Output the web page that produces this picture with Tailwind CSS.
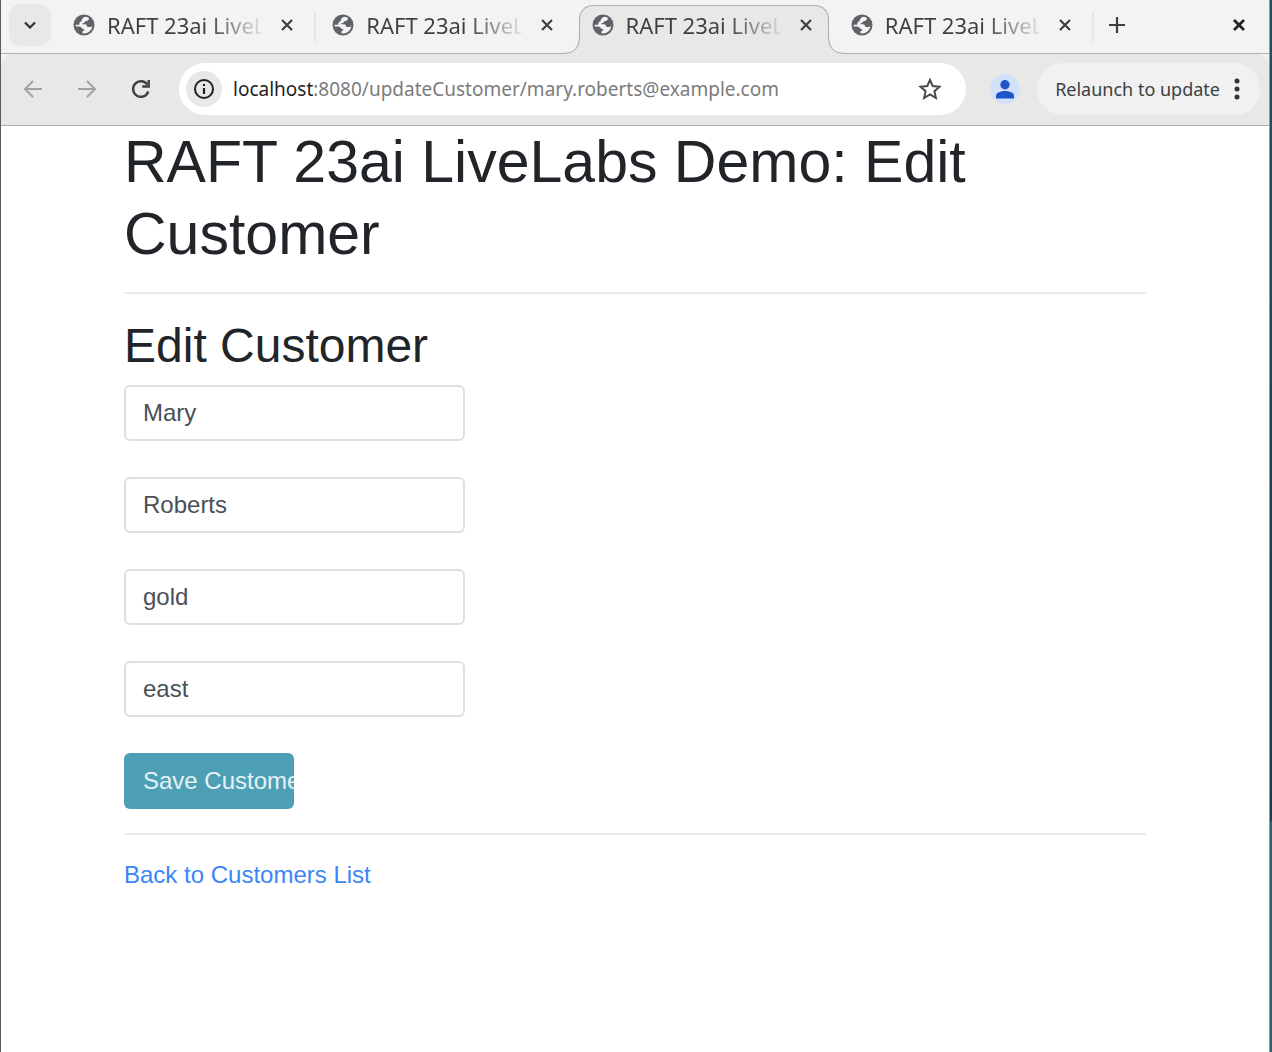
<!DOCTYPE html>
<html lang="en">
<head>
<meta charset="utf-8">
<title>RAFT 23ai LiveLabs Demo</title>
<script src="https://cdn.jsdelivr.net/npm/@tailwindcss/browser@4"></script>
</head>
<body class="flex min-h-screen bg-white">
<svg class="hidden" aria-hidden="true">
  <symbol id="globe" viewBox="0 0 22 22">
    <circle cx="11" cy="11" r="10.500" fill="#5f6368"/>
    <path d="M12.500 2.800 C14.200 3 15.500 3.600 16 4.300 C15.800 6.300 14.500 7.200 12.300 7.200 C12 8.500 11 9 9.500 9.200 L9.300 10.300 H12 C13.500 10.400 14.200 11.500 14.300 13 H17.500 C18.500 13 19 12 19.400 11 A8.400 8.400 0 0 1 9.500 19.300 V17.200 C10.500 16.900 11.300 16.200 11.400 15.200 C9.500 14.900 8.500 14.300 8 13 L6 12.600 H2.700 L2.600 10.800 H6.300 C6.300 8.800 6.700 7.500 8.500 7.200 C9 5 10 3.200 12.500 2.800Z" fill="#f3f3f3"/>
  </symbol>
  <symbol id="cross" viewBox="0 0 12 12">
    <path d="M1 1 L11 11 M11 1 L1 11" fill="none" stroke="currentColor" stroke-width="2.200"/>
  </symbol>
</svg>
<div class="flex min-w-0 flex-1 flex-col border-r border-l border-r-[#8b9a9b] border-l-[#5b5b5b] font-['Noto_Sans',sans-serif] text-[#3c4043]">
  <header>
    <div class="flex h-[54px] items-stretch bg-[#f3f3f3] shadow-[inset_0_-1px_0_#b0b0af]">
      <button aria-label="Search tabs" class="mt-1 ml-2 flex size-[42px] shrink-0 items-center justify-center rounded-xl bg-[#e8e8e6]">
        <svg class="h-2 w-3" viewBox="0 0 12 8"><path d="M1 1.500 L6 6.500 L11 1.500" fill="none" stroke="#303335" stroke-width="2.200"/></svg>
      </button>
      <nav aria-label="Tabs" class="ml-[9px] flex max-w-[1037px] min-w-0 flex-1">
        <div class="flex min-w-0 flex-1 items-center pr-[17px] pb-1 pl-[13px]">
          <svg class="size-[22px] shrink-0"><use href="#globe"/></svg>
          <a href="#" class="ml-3 min-w-0 flex-1 overflow-hidden bg-linear-to-r from-[#3c4043] from-65% to-[#3c4043]/10 to-100% bg-clip-text text-[22px] leading-8 whitespace-nowrap text-transparent">RAFT 23ai LiveLabs</a>
          <button aria-label="Close tab" class="ml-5"><svg class="size-3"><use href="#cross"/></svg></button>
        </div>
        <span class="my-3 w-[9px] shrink-0 bg-linear-to-r from-[#e6e6e4] to-[#e6e6e4] bg-[length:2px_100%] bg-center bg-no-repeat"></span>
        <div class="flex min-w-0 flex-1 items-center pr-[17px] pb-1 pl-[13px]">
          <svg class="size-[22px] shrink-0"><use href="#globe"/></svg>
          <a href="#" class="ml-3 min-w-0 flex-1 overflow-hidden bg-linear-to-r from-[#3c4043] from-65% to-[#3c4043]/10 to-100% bg-clip-text text-[22px] leading-8 whitespace-nowrap text-transparent">RAFT 23ai LiveLabs</a>
          <button aria-label="Close tab" class="ml-5"><svg class="size-3"><use href="#cross"/></svg></button>
        </div>
        <span class="w-[9px] shrink-0"></span>
        <div class="relative mt-[5px] flex min-w-0 flex-1 items-center rounded-t-[14px] border border-b-0 border-[#adadac] bg-[#e8e8e6] pr-4 pb-[10px] pl-3">
          <svg class="absolute bottom-0 -left-[17px] h-4 w-[17px]" viewBox="0 0 17 16"><path d="M0 16 H17 V0 H16.500 Q16.500 15.500 0 15.500Z" fill="#e8e8e6"/><path d="M16 0 H17 V16 H10Z" fill="#e8e8e6"/><path d="M0 15.500 Q16.500 15.500 16.500 0" fill="none" stroke="#adadac"/></svg>
          <svg class="absolute -right-[17px] bottom-0 h-4 w-[17px]" viewBox="0 0 17 16"><path d="M17 16 H0 V0 H.5 Q.5 15.500 17 15.500Z" fill="#e8e8e6"/><path d="M1 0 H0 V16 H7Z" fill="#e8e8e6"/><path d="M17 15.500 Q.5 15.500 .5 0" fill="none" stroke="#adadac"/></svg>
          <svg class="size-[22px] shrink-0"><use href="#globe"/></svg>
          <a href="#" aria-current="page" class="ml-3 min-w-0 flex-1 overflow-hidden bg-linear-to-r from-[#3c4043] from-65% to-[#3c4043]/10 to-100% bg-clip-text text-[22px] leading-8 whitespace-nowrap text-transparent">RAFT 23ai LiveLabs</a>
          <button aria-label="Close tab" class="ml-5"><svg class="size-3"><use href="#cross"/></svg></button>
        </div>
        <span class="w-[9px] shrink-0"></span>
        <div class="flex min-w-0 flex-1 items-center pr-[17px] pb-1 pl-[13px]">
          <svg class="size-[22px] shrink-0"><use href="#globe"/></svg>
          <a href="#" class="ml-3 min-w-0 flex-1 overflow-hidden bg-linear-to-r from-[#3c4043] from-65% to-[#3c4043]/10 to-100% bg-clip-text text-[22px] leading-8 whitespace-nowrap text-transparent">RAFT 23ai LiveLabs</a>
          <button aria-label="Close tab" class="ml-5"><svg class="size-3"><use href="#cross"/></svg></button>
        </div>
        <span class="my-3 w-[9px] shrink-0 bg-linear-to-r from-[#e6e6e4] to-[#e6e6e4] bg-[length:2px_100%] bg-center bg-no-repeat"></span>
      </nav>
      <button aria-label="New tab" class="mb-1 ml-3"><svg class="size-4" viewBox="0 0 16 16"><path d="M8 0 V16 M0 8 H16" stroke="#3c4043" stroke-width="2.200"/></svg></button>
      <button aria-label="Close window" class="mr-6 mb-1 ml-auto text-[#222]"><svg class="size-3" viewBox="0 0 12 12"><path d="M1 1 L11 11 M11 1 L1 11" stroke="currentColor" stroke-width="2.800"/></svg></button>
    </div>
    <div class="bg-[#f3f3f3]">
    <div class="flex h-[72px] items-center rounded-t-xl border-b border-[#adadac] bg-[#e8e8e6] pr-[9px] pb-px pl-[5px]">
      <button aria-label="Back" class="flex w-[54px] justify-center"><svg class="size-5" viewBox="0 0 20 20"><path d="M19 10 H2 M10 2 L2 10 L10 18" fill="none" stroke="#a2a3a3" stroke-width="2"/></svg></button>
      <button aria-label="Forward" class="flex w-[54px] justify-center"><svg class="size-5" viewBox="0 0 20 20"><path d="M1 10 H18 M10 2 L18 10 L10 18" fill="none" stroke="#a2a3a3" stroke-width="2"/></svg></button>
      <button aria-label="Reload" class="flex w-[54px] justify-center"><svg class="size-5" viewBox="0 0 20 20"><path d="M16.300 5.500 A7.800 7.800 0 1 0 17.300 12.500" fill="none" stroke="#3c4043" stroke-width="2.400"/><path d="M17.700 1 V7.500 H11.200" fill="none" stroke="#3c4043" stroke-width="2.400"/></svg></button>
      <div class="ml-[11px] flex h-[52px] min-w-0 flex-1 items-center rounded-full bg-white pr-6 pl-[7px]">
        <button aria-label="View site information" class="flex size-9 shrink-0 items-center justify-center rounded-full bg-[#e8e8e6]"><svg class="size-5" viewBox="0 0 20 20"><circle cx="10" cy="10" r="9" fill="none" stroke="#1f1f1f" stroke-width="2"/><path d="M10 5 V7 M10 9 V15" stroke="#1f1f1f" stroke-width="2.200"/></svg></button>
        <div role="textbox" aria-label="Address" class="ml-[11px] min-w-0 flex-1 overflow-hidden text-[19px] leading-8 whitespace-nowrap text-[#7b7b7b]"><span class="text-[#1f1f1f]">localhost</span>:8080/updateCustomer/mary.roberts@example.com</div>
        <button aria-label="Bookmark this tab"><svg class="size-6" viewBox="0 0 24 24"><path d="M12 3 L14.700 9 L21.500 9.700 L16.400 14.200 L17.900 21 L12 17.400 L6.100 21 L7.600 14.200 L2.500 9.700 L9.300 9Z" fill="none" stroke="#4a4a4a" stroke-width="2"/></svg></button>
      </div>
      <button aria-label="Profile" class="ml-6 flex size-[30px] shrink-0 items-center justify-center rounded-full bg-[#d3e0fb]"><svg class="h-[19px] w-5" viewBox="0 0 20 19"><circle cx="10" cy="4.700" r="4.700" fill="#1f55cb"/><path d="M1 18.500 V15.500 C1 12.500 6 11 10 11 S19 12.500 19 15.500 V18.500Z" fill="#1f55cb"/></svg></button>
      <button class="ml-[17px] flex h-[52px] shrink-0 items-center gap-[14px] rounded-full bg-[#f1f1f1] pr-5 pl-[18px] text-lg leading-8">Relaunch to update<svg class="h-[22px] w-[6px]" viewBox="0 0 6 22"><g fill="#303335"><circle cx="3" cy="3" r="2.500"/><circle cx="3" cy="11" r="2.500"/><circle cx="3" cy="19" r="2.500"/></g></svg></button>
    </div>
    </div>
  </header>
  <main class="mx-auto w-full max-w-[1022px] font-['Liberation_Sans',Arial,sans-serif] text-[24px] leading-9 text-[#212529]">
    <h1 class="text-[59px] leading-[72px]">RAFT 23ai LiveLabs Demo: Edit Customer</h1>
    <hr class="mt-[22px] mb-6 border-t-2 border-[#ebebeb]">
    <h2 class="text-[48px] leading-[56px]">Edit Customer</h2>
    <form class="mt-[11px] flex flex-col items-start gap-9">
      <input aria-label="First name" value="Mary" class="h-14 w-1/3 rounded-md border-2 border-[#dce0e5] px-[17px] text-[#495057]">
      <input aria-label="Last name" value="Roberts" class="h-14 w-1/3 rounded-md border-2 border-[#dce0e5] px-[17px] text-[#495057]">
      <input aria-label="Tier" value="gold" class="h-14 w-1/3 rounded-md border-2 border-[#dce0e5] px-[17px] text-[#495057]">
      <input aria-label="Region" value="east" class="h-14 w-1/3 rounded-md border-2 border-[#dce0e5] px-[17px] text-[#495057]">
      <button type="button" class="h-14 w-1/6 overflow-hidden rounded-md bg-[#4d9fb5] pl-[19px] text-left whitespace-nowrap text-[#e4f2f5]">Save Customer</button>
    </form>
    <hr class="mt-6 mb-[22px] border-t-2 border-[#ebebeb]">
    <a href="#" class="text-[#3b86f7]">Back to Customers List</a>
  </main>
</div>
<div class="w-[2px] shrink-0 bg-linear-to-b from-[#1f5358] from-0% via-[#193c47] via-78% to-[#2e606a] to-78%"></div>
</body>
</html>
